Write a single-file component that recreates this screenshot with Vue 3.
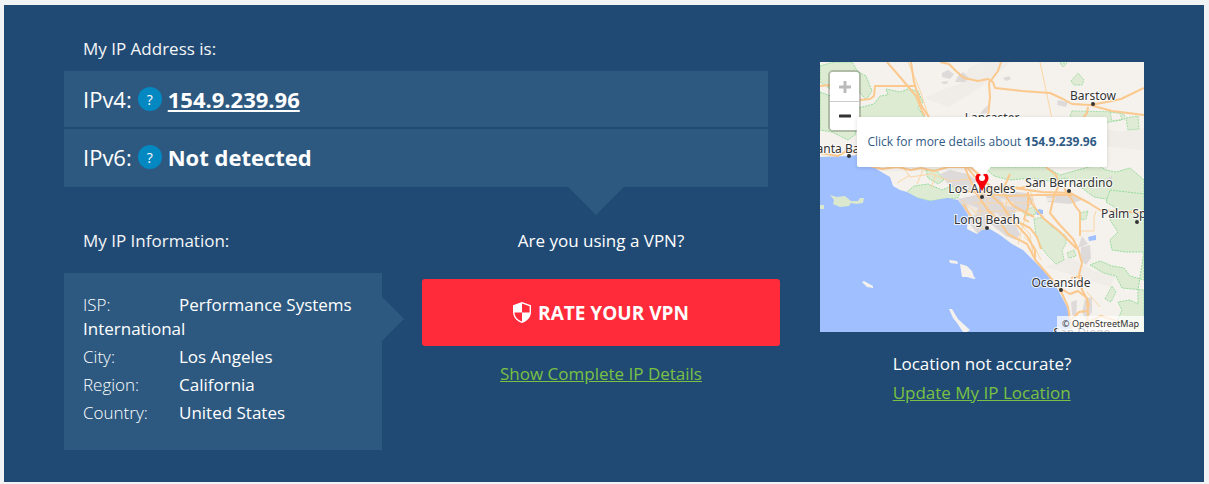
<script setup>
const addresses = [
  { label: 'IPv4:', value: '154.9.239.96', href: '#details' },
  { label: 'IPv6:', value: 'Not detected' },
]

const details = [
  { label: 'ISP:', value: 'Performance Systems International' },
  { label: 'City:', value: 'Los Angeles' },
  { label: 'Region:', value: 'California' },
  { label: 'Country:', value: 'United States' },
]

const cities = [
  { name: 'Barstow', x: 273, y: 38, dx: 273, dy: 42 },
  { name: 'Lancaster', x: 172, y: 60 },
  { name: 'Santa Barbara', x: 30, y: 91, dx: 29, dy: 94 },
  { name: 'Los Angeles', x: 162, y: 131, dx: 162, dy: 135 },
  { name: 'San Bernardino', x: 249, y: 125, dx: 249, dy: 129 },
  { name: 'Long Beach', x: 167, y: 162, dx: 167, dy: 166 },
  { name: 'Palm Springs', x: 318, y: 156, dx: 317, dy: 160 },
  { name: 'Oceanside', x: 241, y: 225, dx: 241, dy: 228 },
  { name: 'San Diego', x: 262, y: 275 },
]
</script>

<template>
  <main class="panel">
    <section class="primary">
      <h2 class="heading">My IP Address is:</h2>
      <div class="addresses">
        <div v-for="item in addresses" :key="item.label" class="address">
          <span>{{ item.label }}</span>
          <button class="help" type="button" :aria-label="`About ${item.label}`">?</button>
          <a v-if="item.href" class="value" :href="item.href">{{ item.value }}</a>
          <strong v-else class="value">{{ item.value }}</strong>
        </div>
      </div>

      <div class="columns">
        <section class="info">
          <h2 class="heading">My IP Information:</h2>
          <div class="card">
            <p v-for="row in details" :key="row.label" class="row">
              <span class="key">{{ row.label }}</span><span>{{ row.value }}</span>
            </p>
          </div>
        </section>

        <section class="vpn">
          <p class="question">Are you using a VPN?</p>
          <button class="rate" type="button">
            <svg width="18" height="21" viewBox="0 0 18 21" aria-hidden="true">
              <path fill="#fff" fill-rule="evenodd" d="M9 0 18 3.2V10c0 5-3.6 9.2-9 11C3.600 19.200 0 15 0 10V3.200ZM9 1.600V10.600H1.400C1.800 14.700 4.500 18 9 19.500V10.600H16.600V4.200Z" />
            </svg>
            RATE YOUR VPN
          </button>
          <a class="link" href="#complete">Show Complete IP Details</a>
        </section>
      </div>
    </section>

    <aside class="location">
      <div class="map">
        <svg class="tiles" viewBox="0 0 324 270" preserveAspectRatio="xMidYMid slice" role="img" aria-label="Map of Southern California">
          <rect width="324" height="270" fill="#f5f1ec" />
          <g fill="#ece7e1">
            <path d="M105 36 122 28 140 22 150 5 165 0H190L170 18 150 32 128 45ZM225 75 260 62 300 70 324 66V88L280 84ZM225 205 250 195 275 210 300 205 290 225 260 215Z" opacity=".5" />
          </g>
          <g class="forest">
            <path d="M0 4 14 0H32L38 10 46 14 52 29 46 38 38 28 24 22 12 28 0 20ZM0 30 16 36 24 60 34 62 36 72 28 78 12 70 0 68ZM54 42 60 34 68 33 66 27 80 30 88 27 98 29 103 40 98 46 105 56H38V46Z" />
            <path d="M164 105H210L226 105 240 113 265 106 278 103 286 108 296 110 310 106 324 118V147L310 142 292 138 274 135 262 126 246 116 230 119 210 116 190 118 174 114Z" />
            <path d="M86 131 94 124 108 122 122 128 132 124 140 130 138 136 124 137 110 139 98 136ZM290 128 324 132V190H306L292 188 290 178 298 170 290 158 296 146 286 140ZM324 190V218L310 214 304 206 292 204 280 199 270 203 284 211 296 214 302 226 324 228V270H302L296 262 302 248 298 240 310 238 318 242V228Z" />
            <path d="M214 157 222 155 232 165 246 174 246 182 242 188 244 198 236 202 228 194 222 186 216 174ZM202 149 214 145 216 152 206 154ZM252 49 250 54 256 59 266 57 270 63 302 58 300 50ZM251 19 258 11 264 18 262 23 254 23ZM290 50 304 52 305 57 292 59ZM306 56 318 54 319 67 308 68ZM285 237 292 224 296 230 291 240ZM247 191 254 188 256 194 249 196ZM260 151 268 149 266 157 262 158ZM240 1H247L243 5Z" opacity=".85" />
            <path d="M106 108 116 108 124 118 118 122 108 116Z" />
          </g>
          <g fill="#dddad9">
            <path d="M122 11 128 8 134 12 130 17 122 15ZM121 20 128 19 127 22H123ZM138 14 143 10 149 16 145 20 135 20ZM183 16 189 14 191 17 186 19ZM163 48 168 43 167 51 160 52ZM120 112 130 108 148 112 156 118 154 128 140 128 128 122ZM156 133 180 128 206 131 214 137 206 151 196 148 194 160 200 172 196 178 186 174 168 160 164 170 158 172 146 158 143 146 138 137ZM226 134 252 132 262 138 250 142 228 140ZM238 38 248 40 246 45 237 43ZM261 185 270 183 271 196 266 203 260 198ZM265 237 272 235 272 250 266 258 262 250ZM251 240 257 238 256 258 252 252ZM287 116 292 114 292 121 288 120ZM258 186 262 174 268 182Z" />
            <path fill="#efe9e4" d="M147 142 158 146 156 153 149 154ZM164 153 178 151 182 158 172 161ZM180 136 194 140 192 145 184 143ZM226 136 236 136 234 139H227Z" />
          </g>
          <path fill="#9fbfff" d="M0 95 28 94 38 93 49 100 58 108 70 115 73 124 80 128 87 130 98 136 110 139 128 136 138 138 143 145 148 153 147 167 157 172 162 168 170 167 180 173 192 182 203 188 215 200 228 213 238 228 247 245 252 261 253 270H0Z" />
          <path fill="#9fbfff" d="M216 149 219 147 223 148V152L217 153ZM268 175 276 173 276 178 269 179Z" />
          <path fill="#dbe8ce" d="M10 133 17 135 25 134 31 139 38 139 40 136 44 136 43 141 36 142 31 141 29 144 20 145 13 142 14 138ZM0 143H4V147H0Z" />
          <g fill="#f5f1ed">
            <path d="M129 198 137 199 138 202 130 201ZM140 202 147 204 152 209 154 215 156 216 154 217 147 215H142L141 209ZM42 220 44 219 53 224V226L47 225ZM129 247 132 247 138 257 150 268 147 270H143L137 261 133 256Z" />
          </g>
          <path class="minor-roads" d="M88 0 100 28 109 56M220 0 232 57M142 138 155 150 164 168M160 128V163M168 121V160M152 141H210M156 149H203M168 155H196M188 130 184 160M210 128 216 148 224 155M205 156 198 182M204 175 214 184 221 198M199 161 210 172 213 192M103 108 97 122M83 105 90 115 112 112 130 119 150 117M116 112 111 126M90 113 77 121M260 169H274V155L276 149M267 230 280 245" />
          <g class="roads">
            <path d="M67 0 80 15 96 34 102 49 105 54" />
            <path d="M91 0 94 20 101 43 109 55M120 67 133 82 142 98 148 113 156 131 168 148 180 160 188 172 207 182 216 199 230 215 240 227 248 245 252 270" />
            <path d="M0 24 10 23 30 24M40 38 50 37 54 34 55 24H95M0 91 18 94 28 88 42 94 50 104 62 107 77 105 91 108 101 106 114 109 128 105 150 105 158 112 160 105" />
            <path d="M120 0 129 2 137 10 144 16 158 19 168 17 173 20 175 26 202 29 230 31 243 37 252 42 270 43 287 40 301 37 324 26M270 43 292 49 324 53M268 45 267 51 258 62M181 0 178 9 169 21 170 35 168 55M143 100 154 114 174 126 195 126 222 130 250 131 269 141 280 148 324 151M138 128 160 131 188 134 218 133 252 133" />
            <path d="M226 105 236 113 239 123 234 134 230 151 239 162 253 177 258 187 262 201 259 213 262 228 267 237 268 251 267 270M207 131 212 142 223 156 239 169 257 187M243 228 250 232 258 229 267 236 269 245" />
            <path d="M166 129 181 142 192 158 207 174 215 188 215 198M180 126 192 143 214 155M244 125 246 130 251 136 256 145 260 150V174M185 123 190 112M143 142 154 159M164 129 182 124 201 126 222 120M208 130 208 145 204 157 209 160M198 160 210 166 217 175 221 187M251 258 259 250 268 249M255 264 270 259 281 254 300 260M262 214 251 216" />
          </g>
          <g class="city-labels">
            <g v-for="city in cities" :key="city.name">
              <circle v-if="city.dx" :cx="city.dx" :cy="city.dy" r="2" />
              <text :x="city.x" :y="city.y">{{ city.name }}</text>
            </g>
          </g>
          <path d="M157 112c-3 4-1 7 1 10l4 7 4-7c2-3 4-6 1-10Z" fill="#f80009" />
          <circle cx="162" cy="116" r="3" fill="#fff" />
        </svg>
        <div class="zoom">
          <button type="button" aria-label="Zoom in" disabled>
            <svg width="12" height="12" viewBox="0 0 12 12"><path d="M6 1v10M1 6h10" stroke="#bbb" stroke-width="3" stroke-linecap="round" /></svg>
          </button>
          <button type="button" aria-label="Zoom out">
            <svg width="12" height="12" viewBox="0 0 12 12"><path d="M1 6h10" stroke="#333" stroke-width="3" stroke-linecap="round" /></svg>
          </button>
        </div>
        <a class="popup" href="#details">Click for more details about <b>154.9.239.96</b></a>
        <a class="credit" href="#osm">© OpenStreetMap</a>
      </div>
      <div class="update">
        <p>Location not accurate?</p>
        <a class="link" href="#update">Update My IP Location</a>
      </div>
    </aside>
  </main>
</template>

<style>
body {
  margin: 0;
  background: #f1f3f5;
}
</style>

<style scoped>
.panel {
  display: flex;
  gap: 52px;
  box-sizing: border-box;
  margin: 5px 5px 2px 4px;
  padding: 32px 60px;
  background: #204a73;
  color: #fff;
  font: 17px/24px "Open Sans", "Noto Sans", sans-serif;
}
p, h2 {
  margin: 0;
}
button {
  padding: 0;
  border: 0;
  font-family: inherit;
  cursor: pointer;
}
.primary {
  flex: 704 1 0;
  min-width: 0;
}
.heading {
  padding-left: 19px;
  font-size: 17px;
  font-weight: 500;
  color: #f4f6f8;
}
.addresses {
  position: relative;
  display: flex;
  flex-direction: column;
  gap: 2px;
  margin-top: 10px;
}
.addresses::after {
  content: "";
  position: absolute;
  top: 100%;
  left: calc(75% - 24px);
  border: 28px solid transparent;
  border-top-color: #2d5980;
  border-bottom: 0;
}
.address {
  display: flex;
  align-items: center;
  gap: 6px;
  padding: 16px 19px;
  background: #2d5980;
  font-size: 22px;
}
.address:last-child {
  padding-bottom: 18px;
}
.help {
  width: 24px;
  height: 24px;
  border-radius: 50%;
  background: #0488c2;
  color: #fff;
  font-size: 14px;
}
.value {
  color: #fff;
  font-weight: 700;
}
.columns {
  display: flex;
  gap: 40px;
  margin-top: 42px;
  margin-right: -12px;
}
.info {
  flex: 318 1 0;
  min-width: 0;
}
.card {
  position: relative;
  margin-top: 20px;
  padding: 20px 19px 21px;
  background: #2d5980;
}
.card::after {
  content: "";
  position: absolute;
  left: 100%;
  top: 24px;
  border: 22px solid transparent;
  border-left-color: #2d5980;
  border-right: 0;
}
.row {
  margin-bottom: 4px;
  font-weight: 500;
}
.key {
  display: inline-block;
  width: 96px;
  font-weight: 300;
}
.vpn {
  flex: 358 1 0;
  display: flex;
  flex-direction: column;
  align-items: center;
}
.rate {
  display: flex;
  align-items: center;
  justify-content: center;
  gap: 7px;
  width: 100%;
  height: 67px;
  margin: 26px 0 16px;
  border-radius: 3px;
  background: #ff2b3a;
  color: #fff;
  font-size: 19px;
  font-weight: 700;
}
.link {
  color: #7ac143;
}
.location {
  flex: 324 1 0;
  min-width: 0;
  padding-top: 25px;
}
.map {
  position: relative;
  height: 270px;
  overflow: hidden;
}
.tiles {
  display: block;
  width: 100%;
  height: 100%;
}
.forest {
  fill: #dcebd2;
  stroke: #96dc9c;
  stroke-width: 1;
  stroke-dasharray: 2 1;
}
.roads, .minor-roads {
  fill: none;
  stroke: #fbc88d;
  stroke-width: 2;
  stroke-linejoin: round;
}
.minor-roads {
  stroke: #fbd6a6;
  stroke-width: 1;
}
.city-labels {
  fill: #333;
  font-family: "Noto Sans", sans-serif;
  font-size: 12px;
  text-anchor: middle;
}
.city-labels text {
  paint-order: stroke;
  stroke: #fffc;
  stroke-width: 2px;
}
.zoom {
  position: absolute;
  top: 8px;
  left: 8px;
  border: 2px solid #0003;
  border-radius: 5px;
  background-clip: padding-box;
}
.zoom button {
  display: flex;
  align-items: center;
  justify-content: center;
  width: 29px;
  height: 28px;
  background: #fff;
}
.zoom button:first-child {
  height: 30px;
  border-bottom: 1px solid #ccc;
  border-radius: 3px 3px 0 0;
}
.zoom button:last-child {
  border-radius: 0 0 3px 3px;
}
.popup {
  position: absolute;
  left: calc(50% - 125px);
  top: 55px;
  box-sizing: border-box;
  width: 250px;
  border-radius: 2px;
  background: #fff;
  box-shadow: 0 1px 4px #0002;
  color: #2f5b85;
  font-size: 12px;
  line-height: 50px;
  text-align: center;
  text-decoration: none;
  white-space: nowrap;
}
.popup::after {
  content: "";
  position: absolute;
  top: 100%;
  left: calc(50% - 9px);
  border: 9px solid transparent;
  border-top-color: #fff;
  border-bottom: 0;
}
.credit {
  position: absolute;
  right: 0;
  bottom: 0;
  padding: 0 5px;
  background: #fffb;
  color: #333;
  font: 9px/16px "Noto Sans", sans-serif;
  text-decoration: none;
}
.update {
  width: fit-content;
  margin: 20px auto 0;
}
.update p {
  margin-bottom: 5px;
}
</style>
